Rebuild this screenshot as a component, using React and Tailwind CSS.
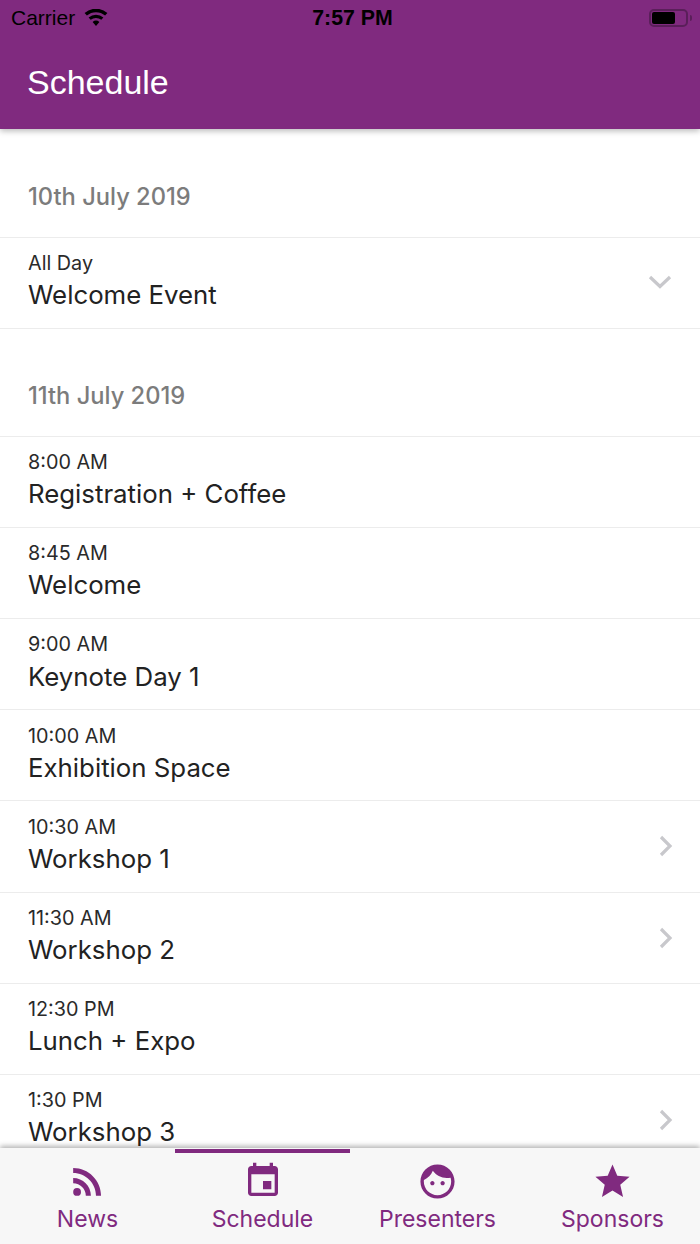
const PURPLE = "#802a7f";

function Row({ time, title, chevron }) {
  return (
    <div className="relative flex h-[91.14px] flex-col border-b border-[#ececec] pl-7 pt-[14.3px]">
      <div className="text-[19.8px] leading-[23px] text-[#2a2a2a]">{time}</div>
      <div className="mt-[4.2px] text-[25.8px] leading-[31px] text-[#222222]">{title}</div>
      {chevron === "right" && (
        <svg className="absolute right-[27px] top-[34px]" width="14" height="22" viewBox="0 0 14 22" fill="none">
          <path d="M2 2l9 9-9 9" stroke="#c8c8cc" strokeWidth="3.2" />
        </svg>
      )}
      {chevron === "down" && (
        <svg className="absolute right-[28px] top-[37px]" width="24" height="14" viewBox="0 0 24 14" fill="none">
          <path d="M2 2l10 9.5L22 2" stroke="#c8c8cc" strokeWidth="3.2" />
        </svg>
      )}
    </div>
  );
}

function DateHeader({ children, tall }) {
  return (
    <div className={`flex items-end border-b border-[#ececec] pb-[25px] pl-7 text-[23.7px] font-medium leading-[30px] text-[#7c7c7c] ${tall ? "h-[108.8px]" : "h-[107.96px]"}`}>
      {children}
    </div>
  );
}

function Tab({ label, children, active }) {
  return (
    <div className="relative flex flex-1 flex-col items-center pt-[13px]">
      {active && <div className="absolute inset-x-0 top-[1px] h-1 bg-[#802a7f]" />}
      <div className="flex h-[40px] items-center justify-center">{children}</div>
      <div className="mt-[4px] text-[23px] leading-[28px] text-[#802a7f]">{label}</div>
    </div>
  );
}

export default function App() {
  return (
    <div className="flex h-[1244px] w-[700px] flex-col overflow-hidden bg-white font-['Inter','Liberation_Sans',sans-serif]">
      <header className="relative z-10 h-[129px] shrink-0 bg-[#802a7f] shadow-[0_2px_6px_rgba(0,0,0,0.28)]">
        <div className="flex h-[36px] items-center justify-between pl-[11px] pr-[8px] text-black">
          <div className="flex w-[222px] items-center gap-[9px] font-['Liberation_Sans',sans-serif] text-[21px]">
            <span>Carrier</span>
            <svg width="24" height="18" viewBox="0 0 24 18">
              <path d="M12 17l-3.4-4a5.2 5.2 0 0 1 6.8 0zM6.7 10.8L4.6 8.4a11.5 11.5 0 0 1 14.8 0l-2.1 2.4a8.3 8.3 0 0 0-10.6 0zM2.9 6.5L.6 4a17.3 17.3 0 0 1 22.8 0l-2.3 2.5a14 14 0 0 0-18.2 0z" fill="#000" />
            </svg>
          </div>
          <div className="mt-[1px] font-['Liberation_Sans',sans-serif] text-[21.3px] font-bold">7:57 PM</div>
          <div className="flex w-[220px] items-center justify-end">
            <div className="flex h-[18px] w-[39px] items-center rounded-[5px] border-2 border-[#5a1f5a] p-[1px]">
              <div className="h-[12px] w-[23px] rounded-[2px] bg-black" />
            </div>
            <div className="ml-[2px] h-[6px] w-[2px] rounded-r bg-[#5a1f5a]" />
          </div>
        </div>
        <div className="pl-[27px] pt-[25px] font-['Liberation_Sans',sans-serif] text-[34px] leading-[42px] text-white">Schedule</div>
      </header>

      <main className="flex-1 overflow-hidden">
        <DateHeader tall>10th July 2019</DateHeader>
        <Row time="All Day" title="Welcome Event" chevron="down" />
        <DateHeader>11th July 2019</DateHeader>
        <Row time="8:00 AM" title="Registration + Coffee" />
        <Row time="8:45 AM" title="Welcome" />
        <Row time="9:00 AM" title="Keynote Day 1" />
        <Row time="10:00 AM" title="Exhibition Space" />
        <Row time="10:30 AM" title="Workshop 1" chevron="right" />
        <Row time="11:30 AM" title="Workshop 2" chevron="right" />
        <Row time="12:30 PM" title="Lunch + Expo" />
        <Row time="1:30 PM" title="Workshop 3" chevron="right" />
      </main>

      <nav className="relative z-10 flex h-[96px] shrink-0 bg-[#f7f7f7] shadow-[0_-2px_5px_rgba(0,0,0,0.3)]">
        <Tab label="News">
          <svg className="shrink-0" width="43" height="43" viewBox="0 0 24 24" fill={PURPLE}>
            <circle cx="6.18" cy="17.82" r="2.18" />
            <path d="M4 4.44v2.83c7.03 0 12.73 5.7 12.73 12.73h2.83c0-8.59-6.97-15.56-15.56-15.56zm0 5.66v2.83c3.9 0 7.07 3.17 7.07 7.07h2.83c0-5.47-4.43-9.9-9.9-9.9z" />
          </svg>
        </Tab>
        <Tab label="Schedule" active>
          <svg className="shrink-0" width="40" height="40" viewBox="0 0 24 24" fill={PURPLE}>
            <path d="M17 12h-5v5h5v-5zM16 1v2H8V1H6v2H5c-1.11 0-1.99.9-1.99 2L3 19c0 1.1.89 2 2 2h14c1.1 0 2-.9 2-2V5c0-1.1-.9-2-2-2h-1V1h-2zm3 18H5V8h14v11z" />
          </svg>
        </Tab>
        <Tab label="Presenters">
          <svg className="shrink-0" width="41" height="41" viewBox="0 0 24 24" fill={PURPLE}>
            <path d="M9 11.75c-.69 0-1.25.56-1.25 1.25s.56 1.25 1.25 1.25 1.25-.56 1.25-1.25-.56-1.25-1.25-1.25zm6 0c-.69 0-1.25.56-1.25 1.25s.56 1.25 1.25 1.25 1.25-.56 1.25-1.25-.56-1.25-1.25-1.25zM12 2C6.48 2 2 6.48 2 12s4.48 10 10 10 10-4.48 10-10S17.52 2 12 2zm0 18c-4.41 0-8-3.59-8-8 0-.29.02-.58.05-.86 2.36-1.05 4.23-2.98 5.21-5.37C11.07 8.33 14.05 10 17.42 10c.78 0 1.53-.09 2.25-.26.21.71.33 1.47.33 2.26 0 4.41-3.59 8-8 8z" />
          </svg>
        </Tab>
        <Tab label="Sponsors">
          <svg className="shrink-0" width="41" height="41" viewBox="0 0 24 24" fill={PURPLE}>
            <path d="M12 17.27L18.18 21l-1.64-7.03L22 9.24l-7.19-.61L12 2 9.19 8.63 2 9.24l5.46 4.73L5.82 21z" />
          </svg>
        </Tab>
      </nav>
    </div>
  );
}
